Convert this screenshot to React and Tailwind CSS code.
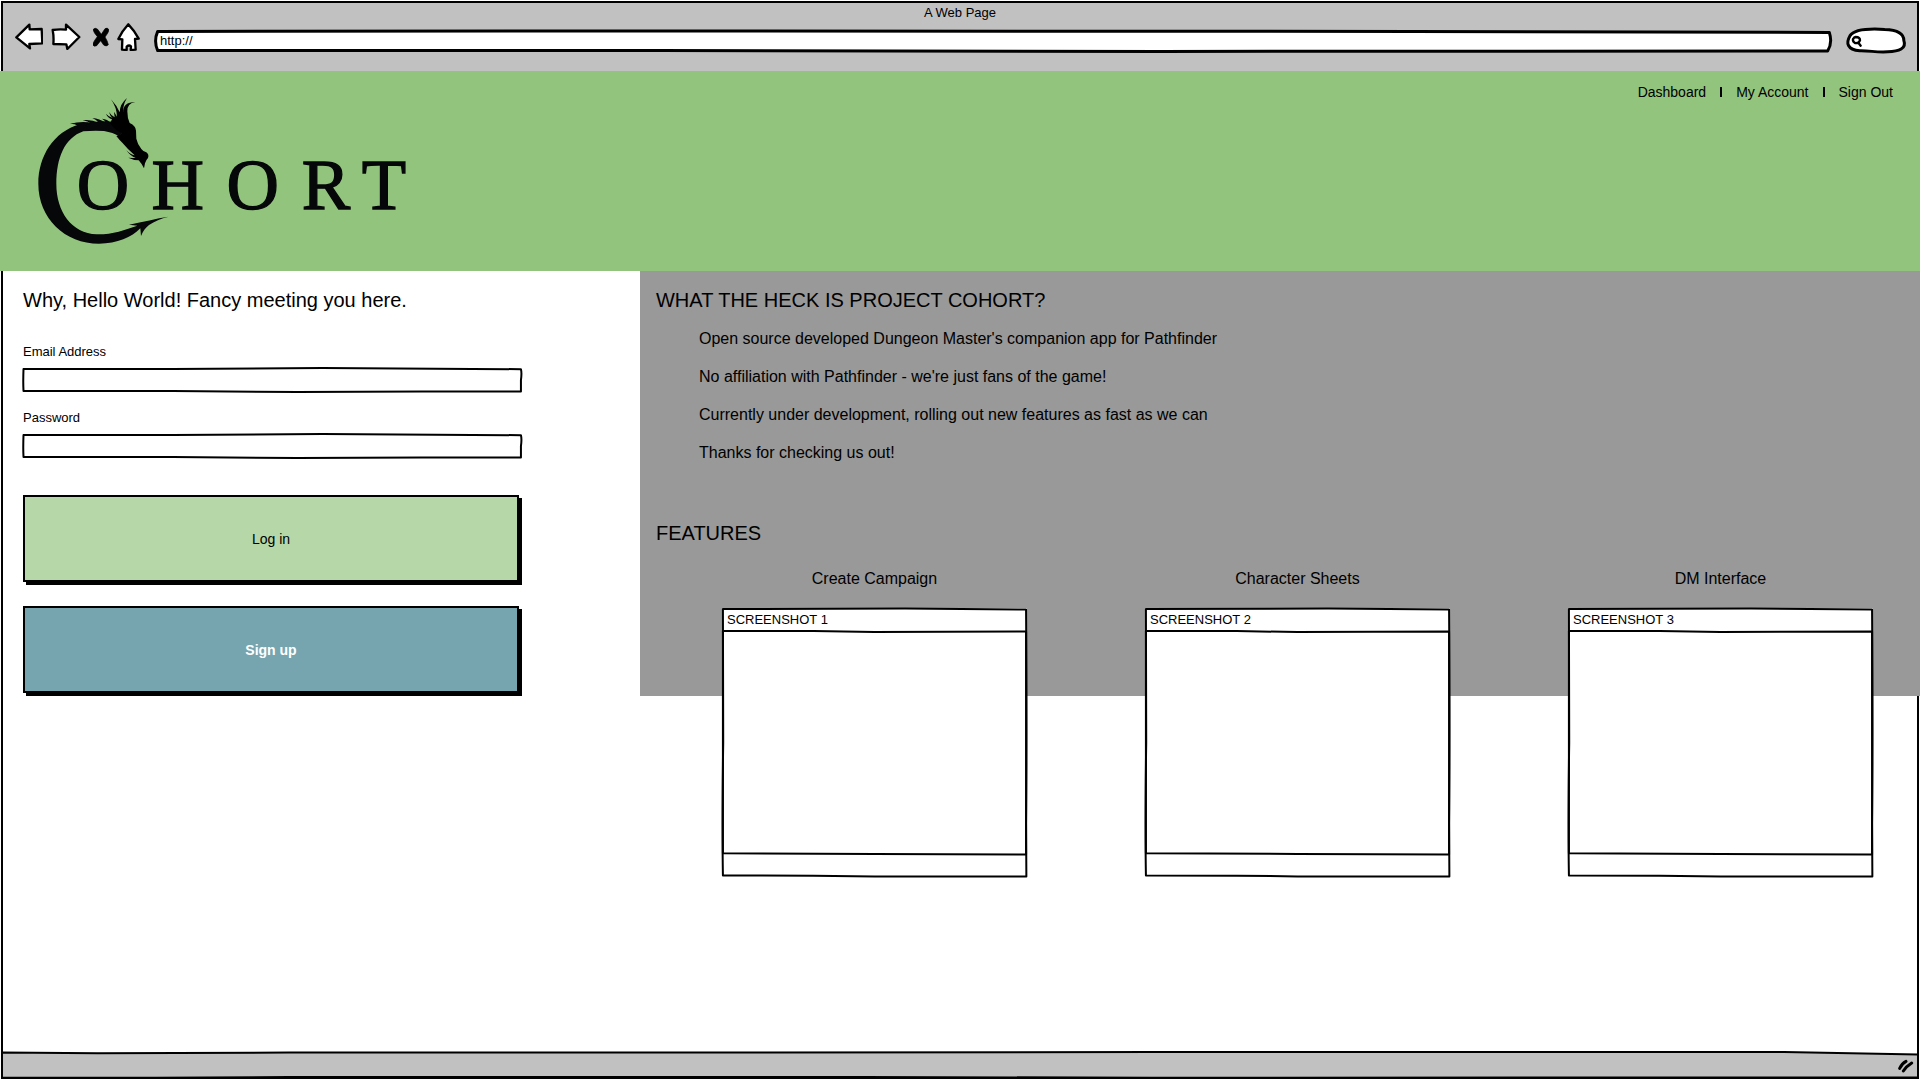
import React from "react";

/* Hand-drawn outline that stretches with the box it decorates. */
function SketchOutline({ d, fill = "none", width = 2 }) {
  return (
    <svg
      aria-hidden="true"
      className="pointer-events-none absolute inset-0 h-full w-full overflow-visible"
      viewBox="0 0 100 100"
      preserveAspectRatio="none"
    >
      <path
        d={d}
        fill={fill}
        stroke="#000"
        strokeWidth={width}
        strokeLinejoin="round"
        vectorEffect="non-scaling-stroke"
      />
    </svg>
  );
}

const iconStroke = {
  fill: "#fff",
  stroke: "#000",
  strokeWidth: 7,
  strokeLinejoin: "round",
  strokeLinecap: "round",
};

function BackIcon() {
  return (
    <svg className="h-[27px] w-7" viewBox="0 0 84 81" aria-hidden="true">
      <path {...iconStroke} d="M4 43 43 5 44 19 80 18 82 61 43 63 45 76Z" />
    </svg>
  );
}

function ForwardIcon() {
  return (
    <svg className="h-[27px] w-[30px]" viewBox="0 0 90 81" aria-hidden="true">
      <path {...iconStroke} d="M5 21Q24 18 45 20L45 5 85 42 49 78 46 64 7 63Q9 42 5 21Z" />
    </svg>
  );
}

function StopIcon() {
  return (
    <svg className="h-5 w-4" viewBox="0 0 48 60" aria-hidden="true">
      <path d="M0 8Q6 0 14 7L25 22 36 5Q44 0 48 9Q46 18 36 30Q44 43 46 53Q40 60 32 54L23 41 11 56Q3 60 -1 53Q2 42 13 29Q3 18 0 8Z" stroke="#000" strokeWidth="2" />
    </svg>
  );
}

function HomeIcon() {
  return (
    <svg className="h-7 w-[23px]" viewBox="0 0 69 84" aria-hidden="true">
      <path
        {...iconStroke}
        d="M34 4Q51 21 65 47L54 48 56 80 41 81 42 70Q36 65 29 71L29 81 15 80 16 49 4 48Q14 26 34 4Z"
      />
    </svg>
  );
}

function Logo() {
  return (
    <svg
      className="block h-40 w-[380px]"
      viewBox="0 0 1140 480"
      role="img"
      aria-label="Cohort"
      fill="#050709"
    >
      {/* body and tail */}
      <path d="M150 103C70 125 25 200 25 281C25 385 105 461 207 461C262 461 305 442 331 415L333 438C340 422 348 412 357 405C374 393 392 386 416 380C378 385 340 396 297 404L322 407C285 420 245 434 200 433C125 430 79 365 79 281C79 205 103 144 160 124Q190 121 222 123Q250 128 266 138L290 120L250 95Q200 90 150 103Z" />
      {/* spines */}
      <path d="M175 97Q150 94 120 101Q136 101 144 107L180 104ZM205 98Q185 88 158 91Q174 93 184 101ZM224 97Q210 86 187 84Q200 89 208 100ZM241 98Q233 88 216 86Q226 91 228 101Z" />
      {/* head */}
      <path
        fill="#000"
        d="M240 100L246 88Q233 84 228 71Q235 80 248 84Q240 78 237 66Q243 76 254 82L252 65L261 80Q260 52 243 28Q260 46 269 67Q269 43 291 24Q278 45 279 69Q278 36 316 36Q291 40 292 64Q292 85 299 99Q318 108 318 122L319 146Q323 164 334 177Q341 186 349 187Q358 194 354 204Q347 211 345 220L342 235Q336 222 326 211Q311 211 295 203Q308 204 317 204Q301 198 289 181Q302 194 314 196Q292 176 277 158Q268 150 259 138Q270 135 276 129Q258 124 240 100Z"
      />
      <g
        fontFamily="'Liberation Serif', serif"
        fontSize="218"
        textAnchor="middle"
        stroke="#050709"
        strokeWidth="4"
      >
        <text x="219" y="357">O</text>
        <text x="443" y="357">H</text>
        <text x="668" y="357">O</text>
        <text x="888" y="357">R</text>
        <text x="1062" y="357">T</text>
      </g>
    </svg>
  );
}

function BrowserBar() {
  return (
    <div className="h-[68px] pr-3 pl-3">
      <p className="pt-[2px] text-center text-[13px] leading-4">A Web Page</p>
      <div className="flex items-center">
        <div className="flex shrink-0 items-center">
          <button type="button" aria-label="Back"><BackIcon /></button>
          <button type="button" aria-label="Forward" className="ml-2"><ForwardIcon /></button>
          <button type="button" aria-label="Stop" className="ml-3"><StopIcon /></button>
          <button type="button" aria-label="Home" className="ml-2"><HomeIcon /></button>
        </div>
        <div className="relative mt-2 ml-4 h-5 flex-1">
          <SketchOutline
            width={3}
            fill="#fff"
            d="M0.1 2 L30 0 L75 2 L99.9 7 Q100.1 60 99.8 100 L60 102 L30 98 L0.1 98 Q-0.15 50 0.1 2Z"
          />
          <input
            type="text"
            aria-label="Address"
            defaultValue="http://"
            className="relative block h-5 w-full bg-transparent px-1 text-[13px] leading-5 outline-none"
          />
        </div>
        <div className="relative mt-2 ml-4 h-[23px] w-[58px] shrink-0">
          <SketchOutline
            width={3}
            fill="#fff"
            d="M5 30 C12 2 40 -2 65 2 C90 4 98 25 98 50 C103 85 90 98 70 99 C50 102 40 94 22 95 C0 90 -2 60 5 30Z"
          />
          <svg className="absolute top-[6px] left-1 h-3 w-3" viewBox="0 0 36 36" aria-hidden="true">
            <path
              d="M14 6Q27 6 27 16Q23 26 12 24Q3 18 7 11Q9 7 14 6ZM22 23 29 32"
              fill="none"
              stroke="#000"
              strokeWidth="7"
              strokeLinecap="round"
            />
          </svg>
          <input
            type="search"
            aria-label="Search"
            className="relative block h-full w-full bg-transparent pr-2 pl-4 text-[13px] outline-none"
          />
        </div>
      </div>
    </div>
  );
}

function NavDivider() {
  return <span aria-hidden="true" className="h-[10px] w-[2px] bg-black" />;
}

function Header() {
  return (
    <header className="relative flex h-[200px] items-start justify-between bg-[#93c47d] pr-[27px] pl-[30px]">
      <a href="#home" className="mt-[19px]">
        <Logo />
      </a>
      <nav className="mt-[11px] flex items-center gap-[14px] text-sm">
        <a href="#dashboard">Dashboard</a>
        <NavDivider />
        <a href="#account">My Account</a>
        <NavDivider />
        <a href="#signout">Sign Out</a>
      </nav>
    </header>
  );
}

const inputSketch =
  "M0.1 4 L30 4 L60 0 L99.8 5 Q100 20 99.8 50 L99.8 98 L80 98 L55 100 L30 96 L0.1 96 Q0 60 0.1 4Z";

function Field({ id, label, type }) {
  return (
    <div>
      <label htmlFor={id} className="block text-[13px] leading-4">
        {label}
      </label>
      <div className="relative mt-2 h-6">
        <SketchOutline d={inputSketch} fill="#fff" />
        <input
          id={id}
          type={type}
          className="relative block h-full w-full bg-transparent px-2 text-sm outline-none"
        />
      </div>
    </div>
  );
}

function LoginPanel() {
  return (
    <section className="w-1/3 px-[23px] pt-[17px]">
      <form className="w-[84%]" onSubmit={(e) => e.preventDefault()}>
        <h1 className="text-xl leading-6">Why, Hello World! Fancy meeting you here.</h1>
        <div className="mt-8 grid gap-[18px]">
          <Field id="email" label="Email Address" type="email" />
          <Field id="password" label="Password" type="password" />
        </div>
        <div className="mt-[37px] grid gap-6 pr-[3px] text-sm">
          <button
            type="submit"
            className="h-[87px] border-2 border-black bg-[#b6d7a8] shadow-[3px_3px_0_#000]"
          >
            Log in
          </button>
          <button
            type="button"
            className="h-[87px] border-2 border-black bg-[#76a5af] font-bold text-white shadow-[3px_3px_0_#000]"
          >
            Sign up
          </button>
        </div>
      </form>
    </section>
  );
}

const points = [
  "Open source developed Dungeon Master's companion app for Pathfinder",
  "No affiliation with Pathfinder - we're just fans of the game!",
  "Currently under development, rolling out new features as fast as we can",
  "Thanks for checking us out!",
];

const features = [
  { title: "Create Campaign", shot: "SCREENSHOT 1" },
  { title: "Character Sheets", shot: "SCREENSHOT 2" },
  { title: "DM Interface", shot: "SCREENSHOT 3" },
];

function FeatureCard({ title, shot }) {
  return (
    <article>
      <h3 className="text-center text-base leading-5">{title}</h3>
      <div className="relative mt-[19px] flex h-[269px] flex-col bg-white">
        <SketchOutline d="M0.3 0.4 L60 0.2 L99.7 0.6 Q100 50 99.7 80 L99.8 99.8 L50 99.8 L30 99.5 L0.3 99.4 Q0 80 0.4 50Z" />
        <p className="h-[23px] px-[5px] text-[13px] leading-6">{shot}</p>
        <div className="relative flex-1">
          <SketchOutline d="M0.3 0 L30 0 L50 0.5 L99.7 0.2 L99.7 99.8 L50 99.5 L0.3 99.2Z" />
        </div>
        <div className="h-[22px]" />
      </div>
    </article>
  );
}

function AboutPanel() {
  return (
    <section className="h-[425px] w-2/3 bg-[#999] pt-[17px]">
      <h2 className="pl-4 text-xl leading-6">WHAT THE HECK IS PROJECT COHORT?</h2>
      <ul className="mt-[17px] grid gap-[18px] pl-[59px] text-base leading-5">
        {points.map((p) => (
          <li key={p}>{p}</li>
        ))}
      </ul>
      <h2 className="mt-[58px] pl-4 text-xl leading-6">FEATURES</h2>
      <div className="mt-6 grid grid-cols-3 gap-[118px] pr-[47px] pl-[82px]">
        {features.map((f) => (
          <FeatureCard key={f.title} {...f} />
        ))}
      </div>
    </section>
  );
}

function StatusBar() {
  return (
    <footer className="relative mx-[2px] mb-[2px] h-[26px]">
      <SketchOutline
        fill="#c1c1c1"
        d="M0 2 L5 5 L15 2 L40 2 L60 0 L93 0 L100 10 L100 98 L60 99 L45 96 L15 96 L8 99 L0 98Z"
      />
      <svg className="absolute right-1 bottom-1 h-[15px] w-4" viewBox="0 0 48 45" aria-hidden="true">
        <path
          d="M5 28Q12 13 24 7M16 36Q25 22 41 12"
          fill="none"
          stroke="#000"
          strokeWidth="9"
          strokeLinecap="round"
        />
      </svg>
    </footer>
  );
}

export default function App() {
  return (
    <div className="relative flex min-h-screen flex-col bg-white font-['Liberation_Sans',Arial,sans-serif] text-black">
      <div className="pointer-events-none absolute inset-px border-2 border-black" />
      <div className="relative mx-px mt-px border-x-2 border-t-2 border-black bg-[#c1c1c1]">
        <BrowserBar />
      </div>
      <Header />
      <main className="relative flex flex-1 items-start">
        <LoginPanel />
        <AboutPanel />
      </main>
      <StatusBar />
    </div>
  );
}
